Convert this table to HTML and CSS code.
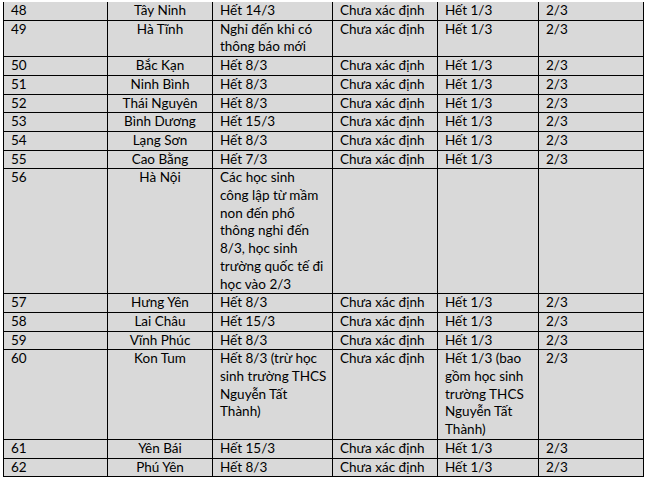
FILE: index.html
```html
<!DOCTYPE html>
<html lang="vi">
<head>
<meta charset="utf-8">
<link rel="stylesheet" href="styles.css">
</head>
<body>
<table class="grid">
<colgroup>
<col class="c1"><col class="c2"><col class="c3"><col class="c4"><col class="c5"><col class="c6">
</colgroup>
<tbody>
<tr class="first"><td>48</td><td class="ctr">Tây Ninh</td><td>Hết 14/3</td><td>Chưa xác định</td><td>Hết 1/3</td><td>2/3</td></tr>
<tr><td>49</td><td class="ctr">Hà Tĩnh</td><td>Nghỉ đến khi có<br>thông báo mới</td><td>Chưa xác định</td><td>Hết 1/3</td><td>2/3</td></tr>
<tr><td>50</td><td class="ctr">Bắc Kạn</td><td>Hết 8/3</td><td>Chưa xác định</td><td>Hết 1/3</td><td>2/3</td></tr>
<tr><td>51</td><td class="ctr">Ninh Bình</td><td>Hết 8/3</td><td>Chưa xác định</td><td>Hết 1/3</td><td>2/3</td></tr>
<tr><td>52</td><td class="ctr">Thái Nguyên</td><td>Hết 8/3</td><td>Chưa xác định</td><td>Hết 1/3</td><td>2/3</td></tr>
<tr><td>53</td><td class="ctr">Bình Dương</td><td>Hết 15/3</td><td>Chưa xác định</td><td>Hết 1/3</td><td>2/3</td></tr>
<tr><td>54</td><td class="ctr">Lạng Sơn</td><td>Hết 8/3</td><td>Chưa xác định</td><td>Hết 1/3</td><td>2/3</td></tr>
<tr><td>55</td><td class="ctr">Cao Bằng</td><td>Hết 7/3</td><td>Chưa xác định</td><td>Hết 1/3</td><td>2/3</td></tr>
<tr><td>56</td><td class="ctr">Hà Nội</td><td>Các học sinh<br>công lập từ mầm<br>non đến phổ<br>thông nghỉ đến<br>8/3, học sinh<br>trường quốc tế đi<br>học vào 2/3</td><td></td><td></td><td></td></tr>
<tr><td>57</td><td class="ctr">Hưng Yên</td><td>Hết 8/3</td><td>Chưa xác định</td><td>Hết 1/3</td><td>2/3</td></tr>
<tr><td>58</td><td class="ctr">Lai Châu</td><td>Hết 15/3</td><td>Chưa xác định</td><td>Hết 1/3</td><td>2/3</td></tr>
<tr><td>59</td><td class="ctr">Vĩnh Phúc</td><td>Hết 8/3</td><td>Chưa xác định</td><td>Hết 1/3</td><td>2/3</td></tr>
<tr><td>60</td><td class="ctr">Kon Tum</td><td>Hết 8/3 (trừ học<br>sinh trường THCS<br>Nguyễn Tất<br>Thành)</td><td>Chưa xác định</td><td>Hết 1/3 (bao<br>gồm học sinh<br>trường THCS<br>Nguyễn Tất<br>Thành)</td><td>2/3</td></tr>
<tr><td>61</td><td class="ctr">Yên Bái</td><td>Hết 15/3</td><td>Chưa xác định</td><td>Hết 1/3</td><td>2/3</td></tr>
<tr><td>62</td><td class="ctr">Phú Yên</td><td>Hết 8/3</td><td>Chưa xác định</td><td>Hết 1/3</td><td>2/3</td></tr>
</tbody>
</table>
</body>
</html>
```

FILE: styles.css
```css
html, body {
  margin: 0;
  padding: 0;
  background: #ffffff;
}

.grid {
  margin: 2px 0 0 3px;
  border-collapse: collapse;
  table-layout: fixed;
  width: 640px;
  background: #d9d9d9;
  font-family: Lato, "Liberation Sans", sans-serif;
  font-size: 13.5px;
  line-height: 17.7px;
  color: #000;
}

.c1 { width: 104px; }
.c2 { width: 105px; }
.c3 { width: 120px; }
.c4 { width: 105px; }
.c5 { width: 101px; }
.c6 { width: 105px; }

.grid td {
  border: 1px solid #000;
  padding: 0 7px;
  vertical-align: top;
  text-align: left;
  white-space: nowrap;
  overflow: hidden;
}

.grid td.ctr {
  text-align: center;
}

.grid tr.first td {
  border-top: none;
}
```
